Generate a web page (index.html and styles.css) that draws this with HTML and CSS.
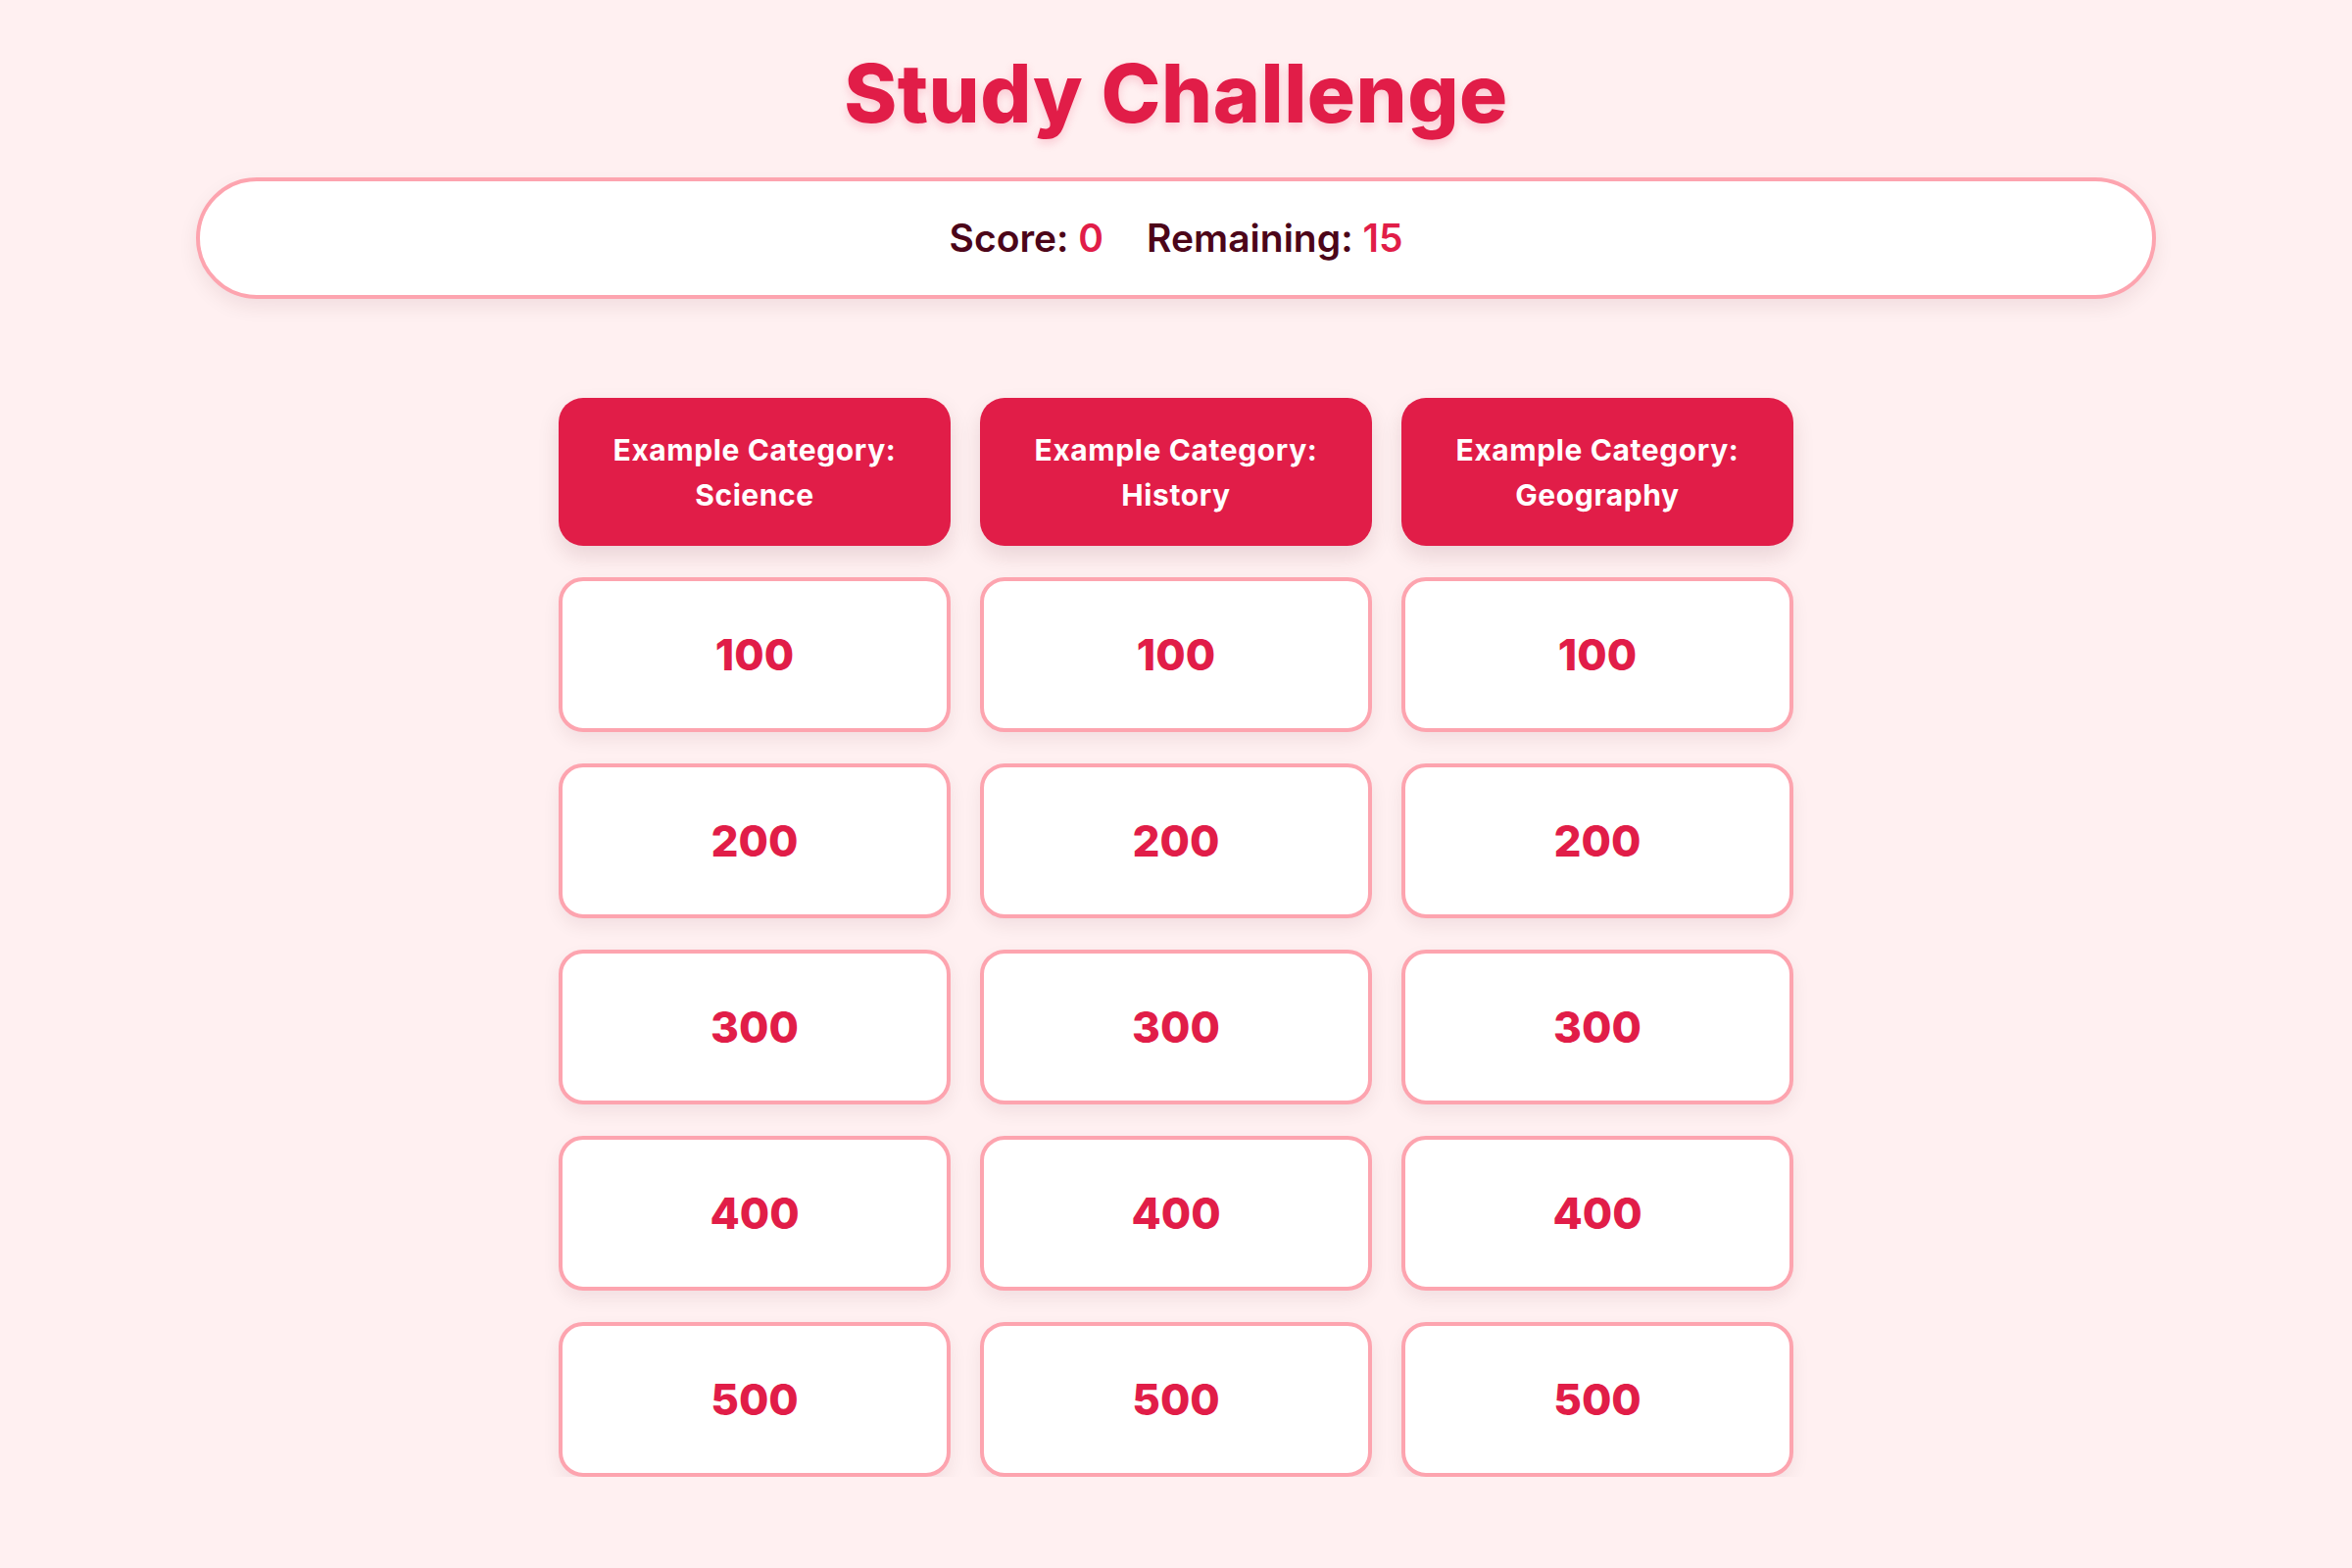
FILE: index.html
```html
<!DOCTYPE html>
<html lang="en">
<head>
<meta charset="UTF-8">
<title>Study Challenge</title>
<meta name="viewport" content="width=device-width,initial-scale=1.0">
<link rel="stylesheet" href="styles.css">
</head>
<body>
<div class="app">
  <h1 class="title">Study Challenge</h1>

  <div class="scoreboard">
    <span class="stat">Score: <b id="score">0</b></span>
    <span class="stat">Remaining: <b id="remaining">15</b></span>
  </div>

  <div class="board">
    <div class="category">Example Category:<br>Science</div>
    <div class="category">Example Category:<br>History</div>
    <div class="category">Example Category:<br>Geography</div>

    <button class="tile">100</button>
    <button class="tile">100</button>
    <button class="tile">100</button>

    <button class="tile">200</button>
    <button class="tile">200</button>
    <button class="tile">200</button>

    <button class="tile">300</button>
    <button class="tile">300</button>
    <button class="tile">300</button>

    <button class="tile">400</button>
    <button class="tile">400</button>
    <button class="tile">400</button>

    <button class="tile">500</button>
    <button class="tile">500</button>
    <button class="tile">500</button>
  </div>
</div>
</body>
</html>
```

FILE: styles.css
```css
:root{
  --c-bg:#fff0f1;--c-card:#fff;--c-primary:#e11d48;
  --c-border:#fda4af;--c-text:#4c0519;
}
*{box-sizing:border-box}
body{
  margin:0;background:var(--c-bg);color:var(--c-text);
  font-family:Inter,"Noto Sans",Arial,sans-serif
}
.app{max-width:2000px;margin:0 auto;padding-top:48px}
.title{
  margin:0 0 37px;text-align:center;font-size:82px;line-height:96px;
  font-weight:800;color:var(--c-primary);letter-spacing:.5px;
  text-shadow:0 4px 10px rgba(225,29,72,.18)
}
.scoreboard{
  display:flex;justify-content:center;gap:44px;
  padding:38px 0;line-height:40px;font-size:39px;font-weight:600;
  background:var(--c-card);border:4px solid var(--c-border);border-radius:999px;
  box-shadow:0 8px 20px rgba(76,5,25,.08)
}
.stat b{color:var(--c-primary);font-weight:600}
.board{
  display:grid;grid-template-columns:repeat(3,400px);
  column-gap:30px;row-gap:32px;justify-content:center;margin-top:101px
}
.category{
  height:151px;display:flex;align-items:center;justify-content:center;
  text-align:center;background:var(--c-primary);color:#fff;
  font-size:30px;line-height:46px;font-weight:700;letter-spacing:.6px;
  border-radius:25px;box-shadow:0 10px 22px rgba(76,5,25,.12)
}
.tile{
  height:158px;background:var(--c-card);border:4px solid var(--c-border);
  border-radius:25px;font-family:inherit;font-size:44px;font-weight:800;
  color:var(--c-primary);cursor:pointer;
  box-shadow:0 8px 18px rgba(76,5,25,.07)
}
.tile:hover{background:#fff5f6}
```
